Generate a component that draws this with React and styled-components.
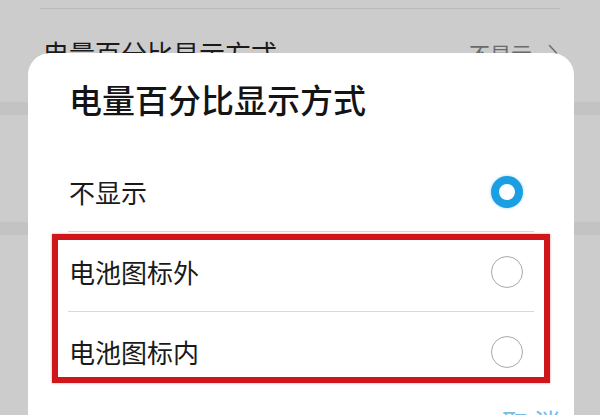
import React from "react";
import styled, { createGlobalStyle } from "styled-components";

const GlobalStyle = createGlobalStyle`
  html, body { margin: 0; padding: 0; }
  body {
    font-family: "Noto Sans", "Noto Sans CJK SC", sans-serif;
    -webkit-font-smoothing: antialiased;
  }
`;

const Screen = styled.div`
  position: relative;
  width: 600px;
  height: 415px;
  overflow: hidden;
  background: #cccccc;
  font-family: "Noto Sans CJK SC", "Noto Sans", sans-serif;
`;

const ListDivider = styled.div`
  margin: 8px 40px 0 40px;
  height: 1px;
  background: #b9b9b9;
`;

const SettingRow = styled.div`
  display: flex;
  align-items: center;
  justify-content: space-between;
  margin: 31px 43px 0 43px;
  height: 26px;
`;

const SettingLabel = styled.span`
  font-size: 26px;
  line-height: 26px;
  color: #1a1a1a;
`;

const SettingValue = styled.span`
  display: flex;
  align-items: center;
  gap: 16px;
  margin-right: -1px;
  font-size: 21px;
  line-height: 26px;
  color: #6a6a6a;
`;

const Band = styled.div`
  height: 13px;
  margin-top: ${(p) => p.$top}px;
  background: #c3c3c3;
`;

const Dialog = styled.div`
  position: absolute;
  top: 53px;
  left: 28px;
  width: 546px;
  bottom: -40px;
  background: #ffffff;
  border-radius: 22px 22px 0 0;
  display: flex;
  flex-direction: column;
`;

const Title = styled.h2`
  margin: 30px 0 0 41px;
  font-size: 33px;
  line-height: 33px;
  font-weight: 500;
  color: #141414;
`;

const OptionList = styled.div`
  margin: 36px 40px 0 40px;
  display: flex;
  flex-direction: column;
`;

const Option = styled.div`
  display: flex;
  align-items: center;
  justify-content: space-between;
  height: 79px;
  padding: 0 11px 0 1px;
  border-bottom: ${(p) => (p.$last ? "none" : "1px solid #d9d9d9")};
`;

const OptionLabel = styled.span`
  font-size: 26px;
  line-height: 26px;
  color: #1a1a1a;
`;

const Radio = styled.span`
  box-sizing: border-box;
  width: 32px;
  height: 32px;
  border-radius: 50%;
  border: ${(p) => (p.$checked ? "8px solid #1b9fe2" : "1.5px solid #a9a9a9")};
  box-shadow: ${(p) => (p.$checked ? "0 0 3px rgba(27,159,226,0.45)" : "none")};
  background: #ffffff;
`;

const Footer = styled.div`
  display: flex;
  justify-content: flex-end;
  margin: 18px 8px 0 0;
`;

const FooterButton = styled.span`
  font-size: 26px;
  line-height: 26px;
  color: #78bde8;
  letter-spacing: 6px;
`;

const Highlight = styled.div`
  position: absolute;
  left: 24px;
  top: 181px;
  width: 498px;
  height: 149px;
  box-sizing: border-box;
  border: 6px solid #cf161b;
  box-shadow: 0 0 2px rgba(207, 22, 27, 0.5);
  pointer-events: none;
`;

const Chevron = () => (
  <svg width="10" height="18" viewBox="0 0 10 18" fill="none">
    <path d="M1.5 1.5 L8.5 9 L1.5 16.5" stroke="#707070" strokeWidth="1.6" strokeLinecap="round" strokeLinejoin="round" />
  </svg>
);

const options = [
  { label: "不显示", checked: true },
  { label: "电池图标外", checked: false },
  { label: "电池图标内", checked: false },
];

export default function App() {
  return (
    <>
      <GlobalStyle />
      <Screen>
        <ListDivider />
        <SettingRow>
          <SettingLabel>电量百分比显示方式</SettingLabel>
          <SettingValue>
            不显示
            <Chevron />
          </SettingValue>
        </SettingRow>
        <Band $top={36} />
        <Band $top={107} />
        <Dialog>
          <Title>电量百分比显示方式</Title>
          <OptionList>
            {options.map((o, i) => (
              <Option key={o.label} $last={i === options.length - 1}>
                <OptionLabel>{o.label}</OptionLabel>
                <Radio $checked={o.checked} />
              </Option>
            ))}
          </OptionList>
          <Footer>
            <FooterButton>取消</FooterButton>
          </Footer>
          <Highlight />
        </Dialog>
      </Screen>
    </>
  );
}
